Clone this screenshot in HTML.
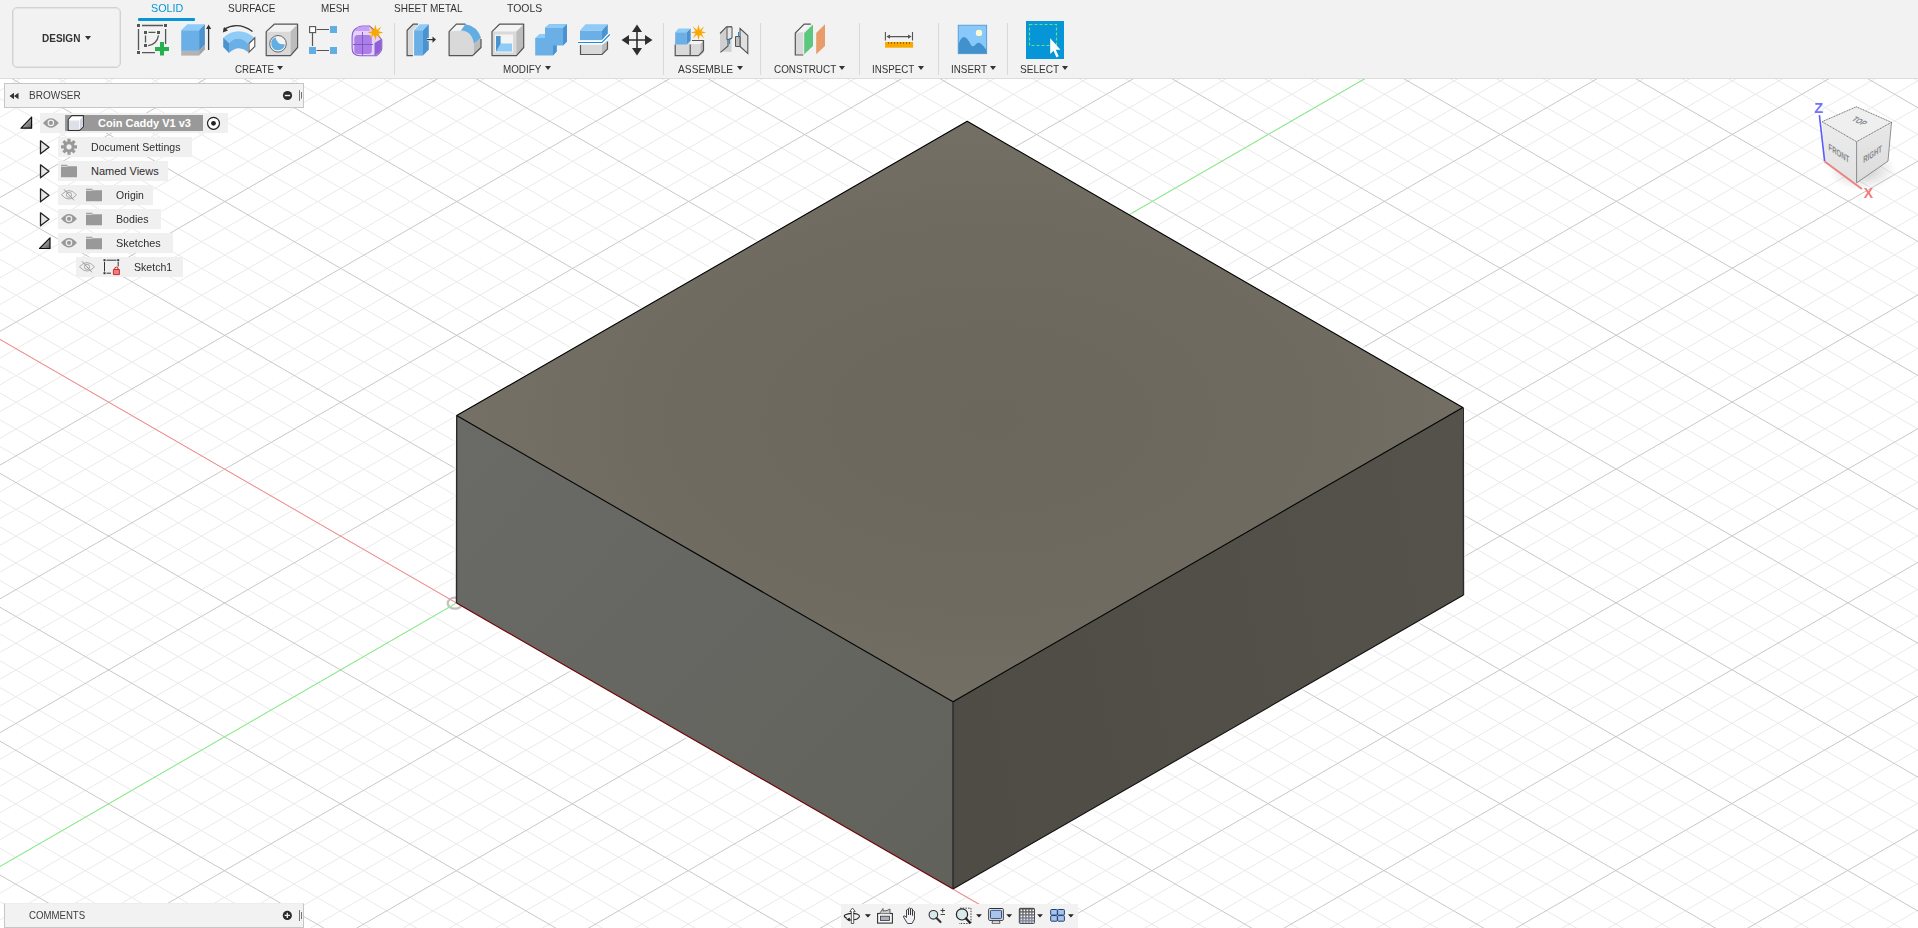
<!DOCTYPE html>
<html><head><meta charset="utf-8"><title>Fusion</title>
<style>
*{box-sizing:border-box;margin:0;padding:0}
html,body{width:1918px;height:928px;overflow:hidden;background:#fff;font-family:"Liberation Sans",sans-serif;color:#3c3c3c}
.abs{position:absolute}
#vp{position:absolute;left:0;top:0}
#tb{position:absolute;left:0;top:0;width:1918px;height:79px;background:#f2f2f2;border-bottom:1px solid #dcdcdc}
.tab{position:absolute;top:2px;font-size:11px;line-height:12px;color:#333;white-space:nowrap;transform-origin:0 0}
.lbl{position:absolute;top:63px;font-size:11px;line-height:12px;color:#333;white-space:nowrap;transform-origin:0 0}
.car2{position:absolute;top:66.3px;width:0;height:0;border-left:3px solid transparent;border-right:3px solid transparent;border-top:4.5px solid #333}
.car{display:inline-block;width:0;height:0;border-left:3px solid transparent;border-right:3px solid transparent;border-top:4px solid #3c3c3c;vertical-align:2px;margin-left:3px}
.sep{position:absolute;top:23px;width:1px;height:52px;background:#d9d9d9}
.ic{position:absolute;top:18px}
.row{position:absolute;height:20px;background:#f0f0f0}
.rt{position:absolute;font-size:11px;line-height:12px;color:#2e2e2e;white-space:nowrap;transform-origin:0 0}
</style></head><body>
<svg id="vp" width="1918" height="928" viewBox="0 0 1918 928">
<defs>
<radialGradient id="gTop" cx="990" cy="420" r="560" gradientUnits="userSpaceOnUse" gradientTransform="translate(990 420) scale(1 0.6) translate(-990 -420)">
<stop offset="0" stop-color="#6b675d"/><stop offset="0.55" stop-color="#6e6a5f"/><stop offset="1" stop-color="#767166"/>
</radialGradient>
<linearGradient id="gLeft" x1="456" y1="415" x2="953" y2="889" gradientUnits="userSpaceOnUse">
<stop offset="0" stop-color="#6a6b66"/><stop offset="1" stop-color="#62625d"/>
</linearGradient>
<linearGradient id="gRight" x1="953" y1="700" x2="1463" y2="600" gradientUnits="userSpaceOnUse">
<stop offset="0" stop-color="#4f4b45"/><stop offset="1" stop-color="#55514b"/>
</linearGradient>
<filter id="blur1" x="-5%" y="-5%" width="110%" height="110%"><feGaussianBlur stdDeviation="1.2"/></filter>
</defs>
<path d="M0 901.83L1918 2008.94M0 848.27L1918 1955.38M0 821.49L1918 1928.61M0 794.72L1918 1901.83M0 767.94L1918 1875.05M0 714.38L1918 1821.50M0 687.61L1918 1794.72M0 660.83L1918 1767.94M0 634.05L1918 1741.16M0 580.50L1918 1687.61M0 553.72L1918 1660.83M0 526.94L1918 1634.05M0 500.16L1918 1607.27M0 446.61L1918 1553.72M0 419.83L1918 1526.94M0 393.05L1918 1500.16M0 366.28L1918 1473.39M0 312.72L1918 1419.83M0 285.94L1918 1393.05M0 259.17L1918 1366.28M0 232.39L1918 1339.50M0 178.83L1918 1285.94M0 152.06L1918 1259.17M0 125.28L1918 1232.39M0 98.50L1918 1205.61M0 44.95L1918 1152.06M0 18.17L1918 1125.28M0 -8.61L1918 1098.50M0 -35.39L1918 1071.72M0 -88.94L1918 1018.17M0 -115.72L1918 991.39M0 -142.50L1918 964.61M0 -169.28L1918 937.84M0 -222.83L1918 884.28M0 -249.61L1918 857.50M0 -276.39L1918 830.73M0 -303.16L1918 803.95M0 -356.72L1918 750.39M0 -383.50L1918 723.62M0 -410.27L1918 696.84M0 -437.05L1918 670.06M0 -490.61L1918 616.51M0 -517.38L1918 589.73M0 -544.16L1918 562.95M0 -570.94L1918 536.17M0 -624.49L1918 482.62M0 -651.27L1918 455.84M0 -678.05L1918 429.06M0 -704.83L1918 402.29M0 -758.38L1918 348.73M0 -785.16L1918 321.95M0 -811.94L1918 295.18M0 -838.71L1918 268.40M0 -892.27L1918 214.84M0 -919.05L1918 188.06M0 -945.82L1918 161.29M0 -972.60L1918 134.51M0 -1026.16L1918 80.95M0 90.51L1918 -1016.14M0 117.27L1918 -989.39M0 144.02L1918 -962.63M0 170.78L1918 -935.88M0 224.29L1918 -882.37M0 251.04L1918 -855.61M0 277.79L1918 -828.86M0 304.55L1918 -802.10M0 358.06L1918 -748.60M0 384.81L1918 -721.84M0 411.57L1918 -695.09M0 438.32L1918 -668.33M0 491.83L1918 -614.82M0 518.58L1918 -588.07M0 545.34L1918 -561.31M0 572.09L1918 -534.56M0 625.60L1918 -481.05M0 652.36L1918 -454.30M0 679.11L1918 -427.54M0 705.87L1918 -400.79M0 759.37L1918 -347.28M0 786.13L1918 -320.52M0 812.88L1918 -293.77M0 839.64L1918 -267.01M0 893.15L1918 -213.51M0 919.90L1918 -186.75M0 946.66L1918 -160.00M0 973.41L1918 -133.24M0 1026.92L1918 -79.73M0 1053.67L1918 -52.98M0 1080.43L1918 -26.22M0 1107.18L1918 0.53M0 1160.69L1918 54.04M0 1187.45L1918 80.79M0 1214.20L1918 107.55M0 1240.96L1918 134.30M0 1294.46L1918 187.81M0 1321.22L1918 214.57M0 1347.97L1918 241.32M0 1374.73L1918 268.07M0 1428.24L1918 321.58M0 1454.99L1918 348.34M0 1481.75L1918 375.09M0 1508.50L1918 401.85M0 1562.01L1918 455.36M0 1588.76L1918 482.11M0 1615.52L1918 508.86M0 1642.27L1918 535.62M0 1695.78L1918 589.13M0 1722.54L1918 615.88M0 1749.29L1918 642.64M0 1776.04L1918 669.39M0 1829.55L1918 722.90M0 1856.31L1918 749.65M0 1883.06L1918 776.41M0 1909.82L1918 803.16M0 1963.33L1918 856.67M0 1990.08L1918 883.43M0 2016.83L1918 910.18" stroke="#eaeaea" stroke-width="1" fill="none"/><path d="M0 875.05L1918 1982.16M0 741.16L1918 1848.27M0 607.27L1918 1714.39M0 473.39L1918 1580.50M0 339.50L1918 1446.61M0 205.61L1918 1312.72M0 71.72L1918 1178.83M0 -62.16L1918 1044.95M0 -196.05L1918 911.06M0 -329.94L1918 777.17M0 -463.83L1918 643.28M0 -597.72L1918 509.40M0 -731.60L1918 375.51M0 -865.49L1918 241.62M0 -999.38L1918 107.73M0 197.53L1918 -909.12M0 331.30L1918 -775.35M0 465.08L1918 -641.58M0 598.85L1918 -507.80M0 732.62L1918 -374.03M0 866.39L1918 -240.26M0 1000.16L1918 -106.49M0 1133.94L1918 27.28M0 1267.71L1918 161.06M0 1401.48L1918 294.83M0 1535.25L1918 428.60M0 1669.03L1918 562.37M0 1802.80L1918 696.15M0 1936.57L1918 829.92" stroke="#c8c8c8" stroke-width="1" fill="none"/>
<path d="M967.2 121.3 L1462.8 407.5 L1463.5 595 L953 889 L456.5 603 L456.7 415.6Z" fill="none" stroke="#fff" stroke-width="5" stroke-opacity="0.75" stroke-linejoin="round" filter="url(#blur1)"/>
<ellipse cx="455" cy="603.2" rx="7.3" ry="5.5" stroke="#c2c2c2" stroke-width="2.3" fill="none"/>
<path d="M456.5 603 L0 339.4" stroke="#ff8a8a" stroke-width="1" fill="none"/>
<path d="M456.5 603 L0 866.6" stroke="#80f880" stroke-width="1" fill="none"/>
<path d="M456.5 603 L1600 -57.3" stroke="#80f880" stroke-width="1" fill="none"/>
<path d="M953 889 L990 910.4" stroke="#ff8a8a" stroke-width="1" fill="none"/>
<path d="M967.2 121.3 L1462.8 407.5 L953 701.7 L456.7 415.6Z" fill="url(#gTop)"/>
<path d="M456.7 415.6 L953 701.7 L953 889 L456.5 603Z" fill="url(#gLeft)"/>
<path d="M953 701.7 L1462.8 407.5 L1463.5 595 L953 889Z" fill="url(#gRight)"/>
<path d="M967.2 121.3 L1462.8 407.5 L953 701.7 L456.7 415.6Z" stroke="#000" stroke-width="1.1" fill="none" stroke-linejoin="round"/>
<path d="M953 701.7 L953 889 M1463.3 407.5 L1463.5 595 M456.7 415.6 L456.5 603" stroke="#2a2a2a" stroke-width="1.4" fill="none"/>
<path d="M1463.5 595 L953 889" stroke="#111" stroke-width="1.1" fill="none"/>
<path d="M456.5 603 L953 889" stroke="#700000" stroke-width="1.1" fill="none"/>
</svg>
<div id="tb">
<div class="abs" style="left:12px;top:7px;width:109px;height:61px;border:1px solid #d2d2d2;border-radius:5px;box-shadow:inset 0 0 0 1px #e4e4e4"></div>
<div class="abs" style="left:41.6px;top:32px;font-size:11px;font-weight:bold;line-height:12px;color:#333;transform:scaleX(0.91);transform-origin:0 0">DESIGN</div>
<div class="car2" style="left:85px;top:35.5px;border-top-color:#333"></div>
<div class="tab" style="left:150.6px;transform:scaleX(0.978);color:#0696d7">SOLID</div>
<div class="tab" style="left:227.8px;transform:scaleX(0.912)">SURFACE</div>
<div class="tab" style="left:320.6px;transform:scaleX(0.893)">MESH</div>
<div class="tab" style="left:393.6px;transform:scaleX(0.910)">SHEET METAL</div>
<div class="tab" style="left:506.8px;transform:scaleX(0.948)">TOOLS</div>
<div class="abs" style="left:138px;top:18px;width:57px;height:3px;background:#0696d7;border-radius:1px"></div>
<div class="lbl" style="left:234.6px;transform:scaleX(0.888)">CREATE</div>
<div class="car2" style="left:277.4px"></div>
<div class="lbl" style="left:502.6px;transform:scaleX(0.895)">MODIFY</div>
<div class="car2" style="left:545.4px"></div>
<div class="lbl" style="left:678.2px;transform:scaleX(0.930)">ASSEMBLE</div>
<div class="car2" style="left:737.2px"></div>
<div class="lbl" style="left:773.6px;transform:scaleX(0.901)">CONSTRUCT</div>
<div class="car2" style="left:839.2px"></div>
<div class="lbl" style="left:872.0px;transform:scaleX(0.885)">INSPECT</div>
<div class="car2" style="left:917.5px"></div>
<div class="lbl" style="left:951.3px;transform:scaleX(0.894)">INSERT</div>
<div class="car2" style="left:990.0px"></div>
<div class="lbl" style="left:1020.4px;transform:scaleX(0.916)">SELECT</div>
<div class="car2" style="left:1062.0px"></div>
<div class="sep" style="left:394px"></div>
<div class="sep" style="left:663px"></div>
<div class="sep" style="left:760px"></div>
<div class="sep" style="left:859px"></div>
<div class="sep" style="left:938px"></div>
<div class="sep" style="left:1007px"></div>
<svg class="abs" style="left:0;top:0" width="1100" height="78" viewBox="0 0 1100 78">
<!-- Sketch -->
<g stroke="#555" stroke-width="1.3" fill="none">
<path d="M142 25.5H163M138.5 29V50M165.6 29V44M142 52.6H155"/>
<path d="M148.5 32.4H155.5M145.5 35.5V42.5M158.5 35.3Q157 44 148.2 45.7"/>
</g>
<g fill="#555">
<rect x="137" y="24" width="3" height="3"/><rect x="164" y="24" width="3" height="3"/><rect x="137" y="51" width="3" height="3"/>
<rect x="144" y="31" width="3" height="3"/><rect x="157" y="31" width="3" height="3"/><rect x="144" y="44" width="3" height="3"/>
</g>
<path d="M155 47.1H169V50.9H155Z M160 42H164V55.6H160Z" fill="#22b14c"/>
<!-- Extrude -->
<path d="M181.2 30.2H199.1V50.9H181.2Z" fill="#6aafe6"/>
<path d="M181.2 30.2L187.3 24.2H204.9L199.1 30.2Z" fill="#8ecbf7"/>
<path d="M199.1 30.2L204.9 24.2V44.5L199.1 50.9Z" fill="#4a93cf"/>
<path d="M181.2 50.9H199.1V55.6H181.2Z" fill="#b3b3b3"/>
<path d="M199.1 50.9L204.9 44.5V49.5L199.1 55.6Z" fill="#a3a3a3"/>
<path d="M208.6 28V50" stroke="#333" stroke-width="1.3"/>
<path d="M206 29L208.6 24.5L211.2 29Z" fill="#333"/>
<!-- Revolve -->
<path d="M223.5 29.5Q238 21 252.5 31.5" stroke="#333" stroke-width="1.2" fill="none"/>
<path d="M222.8 32.6L224 27L228 30.5Z" fill="#333"/>
<path d="M223.2 37.7Q238.4 25 254.4 37.7L248 43.5Q238.4 34 229 43Z" fill="#8ecbf7"/>
<path d="M229 43Q238.4 34 248 43.5L248 51.9Q238.4 44 229 52.9Z" fill="#6aafe6"/>
<path d="M223.2 37.7L229 43V52.9L223.2 47Z" fill="#4a93cf"/>
<path d="M249 43.5L254.8 37.8V46.5L249 52.2Z" fill="#fff" stroke="#555" stroke-width="1.1"/>
<!-- Hole -->
<path d="M266.2 31.6H290.5V55.6H266.2Z" fill="#d9d9d9"/>
<path d="M266.2 31.6L274.2 24.2H297.6L290.5 31.6Z" fill="#f2f2f2"/>
<path d="M290.5 31.6L297.6 24.2V47.5L290.5 55.6Z" fill="#bcbcbc"/>
<path d="M266.2 31.6L274.2 24.2H297.6V47.5L290.5 55.6H266.2Z" fill="none" stroke="#555" stroke-width="1.2" stroke-linejoin="round"/>
<circle cx="278" cy="43.8" r="8.3" fill="#f4f4f4" stroke="#666" stroke-width="1"/>
<path d="M275.5 37.2A6.8 6.8 0 1 0 284.8 44.3Q277 45 275.5 37.2Z" fill="#62ade4"/>
<!-- Pattern -->
<path d="M316.5 29.5H329M312.5 33V46M316.5 50.5H329" stroke="#555" stroke-width="1.2"/>
<rect x="309.6" y="26.6" width="6" height="6" fill="#fff" stroke="#555" stroke-width="1.1"/>
<rect x="330" y="26" width="7" height="7" fill="#62ade4"/>
<rect x="309" y="47" width="7" height="7" fill="#62ade4"/>
<rect x="330" y="47" width="7" height="7" fill="#62ade4"/>
<!-- Form -->
<path d="M362 26H369.5L373 29L381.8 40V48.5Q381.8 51 379 53.5L376.5 55.8H360Q352.1 55.8 352.1 48V37Q352.1 31 356 28.5Q359 26 362 26Z" fill="#e3d3fa" stroke="#8a5fce" stroke-width="1.1"/>
<path d="M358 27H369L370 31H355Z" fill="#c99ef7"/>
<rect x="354.3" y="35" width="17.5" height="19" rx="3.5" fill="#ac7fe8"/>
<path d="M374.5 43L381.3 39V48.5Q381.3 50.5 378.5 53L374.5 56Z" fill="#8e62d0"/>
<path d="M353 44.5H373M362.5 32V55.5" stroke="#7e52c0" stroke-width="0.9"/>
<path d="M375.4 24.5L376.8 30.1L381.3 26.6L378.5 31.3L383.4 32.5L378.5 33.7L381.3 38.4L376.8 34.9L375.4 40.5L374 34.9L369.5 38.4L372.3 33.7L367.4 32.5L372.3 31.3L369.5 26.6L374 30.1Z" fill="#f9a800"/>
</svg>

<svg class="abs" style="left:0;top:0" width="1100" height="78" viewBox="0 0 1100 78">
<!-- Press pull -->
<path d="M407.1 30.2L413.2 24.2H418V30.2H412.9V55.6H407.1Z" fill="#d9d9d9"/>
<path d="M413 30.2L418 25V30.2Z" fill="#f4f4f4"/>
<path d="M412.9 55.6H407.1V30.2L413.2 24.2H418" fill="none" stroke="#555" stroke-width="1.2"/>
<path d="M414.1 30.2H423V55.6H414.1Z" fill="#6aafe6"/>
<path d="M414.1 30.2L419.7 24.2H428.8L423 30.2Z" fill="#8ecbf7"/>
<path d="M423 30.2L428.8 24.2V49.4L423 55.6Z" fill="#4a93cf"/>
<path d="M427 39.6H433" stroke="#f2f2f2" stroke-width="3"/>
<path d="M427 39.6H433" stroke="#333" stroke-width="1.2"/>
<path d="M432.5 36.5L436 39.6L432.5 42.7Z" fill="#333"/>
<!-- Fillet -->
<path d="M449.1 31.6L456.3 24.2H465.4Q476 26 481 37.7L474 43.8V55.6H449.1Z" fill="#d9d9d9"/>
<path d="M449.1 31.6L456.3 24.2H465.4L461 30.5Z" fill="#f4f4f4"/>
<path d="M461 30.5Q472 31 474 43.8L481 37.7Q477 26 465.4 24.2Z" fill="#62ade4"/>
<path d="M474 43.8L481 37.5V48L474 55.6Z" fill="#bcbcbc"/>
<path d="M465.4 24.2H456.3L449.1 31.6V55.6H472.5L481 47.5V39" fill="none" stroke="#555" stroke-width="1.2" stroke-linejoin="round"/>
<!-- Shell -->
<path d="M492 31.6L499.5 24.2H523.7V47.5L516.5 55.6H492Z" fill="#d9d9d9"/>
<path d="M492 31.6L499.5 24.2H523.7L516.5 31.6Z" fill="#f4f4f4"/>
<path d="M516.5 31.6L523.7 24.2V47.5L516.5 55.6Z" fill="#bcbcbc"/>
<path d="M492 31.6L499.5 24.2H523.7V47.5L516.5 55.6H492Z" fill="none" stroke="#555" stroke-width="1.2" stroke-linejoin="round"/>
<rect x="495" y="34.5" width="18" height="18" fill="#f4f4f4"/>
<path d="M496 36H500.5V43.5H512V51.5H496Z" fill="#8ecbf7"/>
<path d="M496 36H500.5V43.5L496 51.5Z" fill="#4a93cf"/>
<!-- Combine -->
<path d="M535.2 38H545V27.8L549.2 24.2H567V41.5L563 45.5H556.7V51.5L553 55.6H535.2Z" fill="#6aafe6"/>
<path d="M545 28L549.2 24.2H567L563 28Z M535.2 38L539.5 34H545V38Z" fill="#8ecbf7"/>
<path d="M563 28L567 24.2V41.5L563 45.5Z M553 45.5H556.7V51.5L553 55.6Z" fill="#4a93cf"/>
<!-- Split -->
<path d="M580 30.5H602V40H580Z" fill="#6aafe6"/>
<path d="M580 30.5L585.5 24.2H607.8L602 30.5Z" fill="#8ecbf7"/>
<path d="M602 30.5L607.8 24.2V33.5L602 40Z" fill="#4a93cf"/>
<path d="M578 42.5H602L609.8 34.5" stroke="#fff" stroke-width="3" fill="none"/>
<path d="M578 42.5H602L609.8 34.5" stroke="#1a8be0" stroke-width="1.1" fill="none"/>
<path d="M580.5 45H602V54.5H580.5Z" fill="#d9d9d9"/>
<path d="M602 45L607.5 41V49L602 54.5Z" fill="#bcbcbc"/>
<path d="M580.5 45V54.5H602L607.5 49V41.5" fill="none" stroke="#555" stroke-width="1.2"/>
<!-- Move -->
<path d="M637 28V50M624 40H650" stroke="#2e2e2e" stroke-width="1.6"/>
<path d="M637 24.5L642 32H632Z M637 55.5L642 48H632Z M621.5 40L629 35V45Z M652.5 40L645 35V45Z" fill="#2e2e2e"/>
<!-- Assemble -->
<path d="M675.2 37.5H690.2V55.6H675.2Z M690.2 44H700.5V55.6H690.2Z" fill="#d9d9d9"/>
<path d="M690.2 44L693 40.5H703.5L700.5 44Z" fill="#f4f4f4"/>
<path d="M700.5 44L703.5 40.5V52.5L700.5 55.6Z" fill="#bcbcbc"/>
<path d="M675.2 44.5V55.6H698.5L703.5 50.5V40.5H692M690.2 44.5V55.6" fill="none" stroke="#555" stroke-width="1.2"/>
<path d="M675.2 32.2H686.7V44.5H675.2Z" fill="#6aafe6"/>
<path d="M675.2 32.2L678.5 28.5H690.7L686.7 32.2Z" fill="#8ecbf7"/>
<path d="M686.7 32.2L690.7 28.5V40.5L686.7 44.5Z" fill="#4a93cf"/>
<path d="M698.5 24.5L699.8 30L704.2 26.6L701.4 31.2L706.3 32.4L701.4 33.6L704.2 38.2L699.8 34.8L698.5 40.3L697.2 34.8L692.8 38.2L695.6 33.6L690.7 32.4L695.6 31.2L692.8 26.6L697.2 30Z" fill="#f9a800"/>
<!-- Joint -->
<path d="M720 34L727.5 27V41L731.5 39V52L723 51.5L720 52.5Z" fill="#d0d0d0"/>
<path d="M720 33.5L726.5 26.8H731.5V38.5L728 40V46L720.5 52.3" fill="none" stroke="#555" stroke-width="1.1"/>
<path d="M727 27H732V38L727 40Z" fill="#e6e6e6" stroke="#555" stroke-width="1"/>
<path d="M740 28.5L747.8 35.5V53.5L740 46.5Z" fill="#e0e0e0" stroke="#555" stroke-width="1.1"/>
<path d="M735.5 36.5H740V46.5H735.5Z" fill="#c0c0c0" stroke="#555" stroke-width="1"/>
<path d="M729.5 38.5V44M738.5 32V37.5" stroke="#1a8be0" stroke-width="1"/>
<!-- Construct -->
<path d="M795.3 33.1L804.2 24.2H810.8L803.3 31.5V55H795.3Z" fill="#d9d9d9"/>
<path d="M795.3 33.1L804.2 24.2H810.8L803.3 32Z" fill="#f4f4f4"/>
<path d="M803.3 55H795.3V33.1L804.2 24.2H810.8" fill="none" stroke="#555" stroke-width="1.2"/>
<path d="M804.2 33.1L813 24.6V45.9L804.2 54.3Z" fill="#5cc77f"/>
<path d="M816.2 33.1L825 24.2V45.9L816.2 54.3Z" fill="#e89c6a"/>
<!-- Inspect -->
<path d="M885.4 32V40.4M912.5 32V40.4M887.5 36.6H910.5" stroke="#555" stroke-width="1.1"/>
<path d="M886.5 36.6L890 34.5V38.7Z M911.5 36.6L908 34.5V38.7Z" fill="#555"/>
<rect x="885.1" y="42" width="28" height="5.7" fill="#f9a800"/>
<path d="M888.5 42V44M891.5 42V44M894.5 42V44M897.5 42V44M900.5 42V44M903.5 42V44M906.5 42V44M909.5 42V44" stroke="#7a5a00" stroke-width="0.8"/>
<!-- Insert -->
<rect x="958.2" y="25.2" width="28.5" height="28.5" fill="#88c8fa" stroke="#4a93cf" stroke-width="0.8"/>
<path d="M958.6 44Q961 37 964 37Q967 37 971 45Q973 48 976 44Q978 42 980 43Q983 45 986.4 50V53.4H958.6Z" fill="#4091cc"/>
<circle cx="979" cy="32.9" r="3.2" fill="#fffbd0"/>
<!-- Select -->
<rect x="1026" y="21" width="38" height="38" fill="#0696d7"/>
<rect x="1029.5" y="24.5" width="27" height="21" fill="none" stroke="#6ee07a" stroke-width="1.1" stroke-dasharray="3 2"/>
<path d="M1050.2 38.3V54L1053.5 50.8L1056.5 57.5L1058.7 56.3L1055.8 49.7H1060.5Z" fill="#fff"/>
</svg>

</div>

<!-- browser panel -->
<div class="abs" style="left:4px;top:83px;width:300px;height:25px;background:#f2f2f2;border:1px solid #c6c6c6"></div>
<div class="rt" style="left:29px;top:89px;color:#3c3c3c;transform:scaleX(0.91)">BROWSER</div>
<div class="row" style="left:40px;top:113px;width:188px;height:20px"></div>
<div class="abs" style="left:65px;top:115px;width:138px;height:16px;background:#999"></div>
<div class="rt" style="left:98px;top:117px;color:#fff;font-weight:bold">Coin Caddy V1 v3</div>
<div class="row" style="left:58px;top:137px;width:134px"></div>
<div class="rt" style="left:91px;top:141px;transform:scaleX(0.963)">Document Settings</div>
<div class="row" style="left:58px;top:161px;width:110px"></div>
<div class="rt" style="left:91px;top:165px">Named Views</div>
<div class="row" style="left:58px;top:185px;width:95px"></div>
<div class="rt" style="left:116px;top:189px;transform:scaleX(0.95)">Origin</div>
<div class="row" style="left:58px;top:209px;width:103px"></div>
<div class="rt" style="left:116px;top:213px;transform:scaleX(0.97)">Bodies</div>
<div class="row" style="left:58px;top:233px;width:115px"></div>
<div class="rt" style="left:116px;top:237px;transform:scaleX(0.99)">Sketches</div>
<div class="row" style="left:76px;top:257px;width:107px"></div>
<div class="rt" style="left:134px;top:261px;transform:scaleX(0.96)">Sketch1</div>
<svg class="abs" style="left:0;top:80px" width="310" height="200" viewBox="0 80 310 200">
<defs>
<linearGradient id="gTri" x1="0" y1="0" x2="1" y2="1"><stop offset="0" stop-color="#e8e8e8"/><stop offset="1" stop-color="#555"/></linearGradient>
<g id="eye"><path d="M-7.9 0Q0 -9.5 7.9 0Q0 9.5 -7.9 0Z" fill="#999"/><circle r="3.3" fill="#f0f0f0"/><circle r="2.1" fill="#999"/></g>
<g id="eyex"><path d="M-7.5 0Q0 -8.5 7.5 0Q0 8.5 -7.5 0Z" fill="none" stroke="#aaa" stroke-width="1"/><circle r="2.6" fill="none" stroke="#aaa" stroke-width="1"/><path d="M-5 -5.5L5 5.5" stroke="#999" stroke-width="1"/></g>
<g id="fold"><path d="M0 0H6L7 1.5H16V12.5H0Z" fill="#999"/><path d="M0 1.5H6.5" stroke="#f0f0f0" stroke-width="0.8"/></g>
<g id="tri"><path d="M0 0L8.5 6.5L0 13Z" fill="#e6e6e6" stroke="#222" stroke-width="1.3" stroke-linejoin="round"/></g>
</defs>
<!-- header icons -->
<path d="M9.5 96L14 92.8V99.2Z M14 96L18.5 92.8V99.2Z" fill="#333"/>
<circle cx="287.5" cy="95.5" r="4.6" fill="#2a2a2a"/><path d="M284.8 95.5H290.2" stroke="#f2f2f2" stroke-width="1.4"/>
<path d="M299.5 90.2V100.9M301.5 92V98.6" stroke="#666" stroke-width="0.9"/>
<!-- row1 -->
<path d="M21 128.2L31.6 117.2V128.2Z" fill="url(#gTri)" stroke="#111" stroke-width="1.2" stroke-linejoin="round"/>
<use href="#eye" x="50.9" y="122.9"/>
<path d="M68.2 119.5L71.8 115.6H83.4V126.6L79.6 130.4H68.2Z" fill="#fff" stroke="#333" stroke-width="1.1" stroke-linejoin="round"/>
<path d="M69 120.5H79V129.8H69Z" fill="#dde0e6"/><path d="M79.8 120L83 116.5V126.3L79.8 129.6Z" fill="#d0d4dc"/>
<circle cx="213.5" cy="123.3" r="6" fill="#fff" stroke="#222" stroke-width="1.2"/><circle cx="213.5" cy="123.3" r="2.4" fill="#222"/>
<!-- row2 -->
<use href="#tri" x="40.5" y="140.8"/>
<g transform="translate(69,146.8)"><circle r="5.6" fill="#999"/><path d="M0 -8V8M-8 0H8M-5.6 -5.6L5.6 5.6M-5.6 5.6L5.6 -5.6" stroke="#999" stroke-width="3.2"/><circle r="2.6" fill="#f0f0f0"/></g>
<!-- row3 -->
<use href="#tri" x="40.5" y="164.8"/>
<use href="#fold" x="61" y="164.8"/>
<!-- row4 -->
<use href="#tri" x="40.5" y="188.8"/>
<use href="#eyex" x="69" y="194.8"/>
<use href="#fold" x="86" y="188.8"/>
<!-- row5 -->
<use href="#tri" x="40.5" y="212.8"/>
<use href="#eye" x="69" y="218.8"/>
<use href="#fold" x="86" y="212.8"/>
<!-- row6 -->
<path d="M39.5 248.5L50 237.8V248.5Z" fill="url(#gTri)" stroke="#111" stroke-width="1.2" stroke-linejoin="round"/>
<use href="#eye" x="69" y="242.8"/>
<use href="#fold" x="86" y="236.8"/>
<!-- row7 -->
<use href="#eyex" x="87" y="266.8"/>
<g stroke="#333" stroke-width="1" fill="none"><path d="M106.5 260.2H116.5M104.5 262V271.5M106.5 273.2H111M118.2 262V266.5"/></g>
<g fill="#333"><rect x="103.5" y="259.2" width="2" height="2"/><rect x="117.2" y="259.2" width="2" height="2"/><rect x="103.5" y="272.2" width="2" height="2"/></g>
<path d="M113.4 269.5H119.4V274.6H113.4Z" fill="#e88080" stroke="#d42a2a" stroke-width="1"/><path d="M114.8 269.5V268.3Q116.4 265.8 118 268.3V269.5" fill="none" stroke="#d42a2a" stroke-width="1.1"/>
</svg>
<!-- comments -->
<div class="abs" style="left:4px;top:903px;width:300px;height:25px;background:#f2f2f2;border:1px solid #c6c6c6;border-top-color:#ededed"></div>
<div class="rt" style="left:29px;top:909px;color:#3c3c3c;transform:scaleX(0.875)">COMMENTS</div>
<svg class="abs" style="left:270px;top:905px" width="40" height="23" viewBox="270 905 40 23">
<circle cx="287.3" cy="915.4" r="4.6" fill="#2a2a2a"/><path d="M284.6 915.4H290M287.3 912.7V918.1" stroke="#f2f2f2" stroke-width="1.3"/>
<path d="M299.5 910V921M301.5 912V919" stroke="#666" stroke-width="0.9"/>
</svg>

<!-- viewcube -->
<svg class="abs" style="left:1790px;top:95px" width="128" height="110" viewBox="1790 95 128 110">
<defs>
<radialGradient id="gSh" cx="0.5" cy="0.5" r="0.5"><stop offset="0" stop-color="#000" stop-opacity="0.22"/><stop offset="1" stop-color="#000" stop-opacity="0"/></radialGradient>
<linearGradient id="gVL" x1="0" y1="0" x2="0" y2="1"><stop offset="0" stop-color="#ececec"/><stop offset="1" stop-color="#e2e2e2"/></linearGradient>
<linearGradient id="gVR" x1="0" y1="0" x2="0" y2="1"><stop offset="0" stop-color="#e8e8e8"/><stop offset="1" stop-color="#dcdcdc"/></linearGradient>
</defs>
<ellipse cx="1862" cy="170" rx="34" ry="20" fill="url(#gSh)"/>
<path d="M1856.3 106.8L1891.5 122.3L1856.6 141.7L1822 121.7Z" fill="#efefef"/>
<path d="M1822 121.7L1856.6 141.7V182.9L1824.6 161.1Z" fill="url(#gVL)"/>
<path d="M1856.6 141.7L1891.5 122.3L1888 161.1L1856.6 182.9Z" fill="url(#gVR)"/>
<path d="M1856.3 106.8L1891.5 122.3L1856.6 141.7L1822 121.7Z" fill="none" stroke="#555" stroke-width="0.8" stroke-dasharray="1.2 0.6"/>
<path d="M1856.6 141.7V182.9M1891.5 122.3L1888 161.1L1856.6 182.9" fill="none" stroke="#666" stroke-width="0.7"/>
<path d="M1819.4 115.2L1824.6 161.1" stroke="#5a5aff" stroke-width="1.6"/>
<path d="M1824.6 161.5L1862 189" stroke="#ec8282" stroke-width="2"/>
<text x="1814.3" y="113.3" font-family="Liberation Sans" font-size="14.5" font-weight="bold" fill="#7272ff">Z</text>
<text x="1863.8" y="198" font-family="Liberation Sans" font-size="14" font-weight="bold" fill="#f27a7a">X</text>
<g font-family="Liberation Sans" font-size="10" font-weight="bold" fill="#85878b">
<text transform="matrix(0.6,0.3,-0.7,0.55,1851,120)">TOP</text>
<text transform="translate(1828.6,149.8) skewY(33) scale(0.6,0.95)">FRONT</text>
<text transform="translate(1863.3,163.2) skewY(-32) scale(0.6,0.95)">RIGHT</text>
</g>
</svg>
<!-- navbar -->
<div class="abs" style="left:841px;top:904px;width:237px;height:24px;background:#f2f2f2"></div>
<svg class="abs" style="left:838px;top:902px" width="245" height="26" viewBox="838 902 245 26">
<g fill="#222">
<path d="M864.9 914.2H870.9L867.9 917.5Z"/><path d="M976.1 914.2H981.9L979 917.5Z"/><path d="M1006.3 914.2H1012.1L1009.2 917.5Z"/><path d="M1037.2 914.2H1042.9L1040 917.5Z"/><path d="M1068 914.2H1073.8L1070.9 917.5Z"/>
</g>
<!-- orbit -->
<path d="M847 918.5Q842 916 846 914.5Q852 912.5 857 914Q862 916 857 919Q853 920.5 848.5 919.8" fill="none" stroke="#222" stroke-width="1.1"/>
<path d="M846.2 919.5L849.8 917.5V921.5Z" fill="#222"/>
<path d="M851.3 923.5V911.5H849.8L852.5 908L855.2 911.5H853.7V923.5Z" fill="#fff" stroke="#333" stroke-width="0.8"/>
<!-- look at -->
<rect x="877.6" y="913.5" width="14.8" height="9.6" fill="#f8f8f8" stroke="#333" stroke-width="1.1"/>
<rect x="880.5" y="916.2" width="9" height="4.3" fill="#aab0c0" stroke="#333" stroke-width="0.8"/>
<path d="M879.5 913.5L883 908.5V911L887 910.5L890 909V913.5" fill="#ccc" stroke="#444" stroke-width="0.8"/>
<!-- hand -->
<path d="M907.5 923.5L903.5 917Q903 915.5 905 916L906.5 917.5V910Q907.5 908.8 908.5 910V915V908.5Q909.5 907.3 910.5 908.5V915V909Q911.5 907.8 912.5 909V915.5V911Q913.5 910 914.5 911.5V919L912 923.5Z" fill="#eef0f4" stroke="#333" stroke-width="0.9" stroke-linejoin="round"/>
<!-- zoom -->
<circle cx="933.4" cy="914.8" r="4.3" fill="#d6eaee" stroke="#333" stroke-width="1.1"/>
<path d="M936.5 918L940.5 922" stroke="#333" stroke-width="2.2" stroke-linecap="round"/>
<path d="M940.5 910.5H945M942.7 908.3V912.7M940.5 914.5H945" stroke="#333" stroke-width="0.9"/>
<!-- zoom window -->
<path d="M960 908.2H971V923.5H959" fill="none" stroke="#333" stroke-width="0.9" stroke-dasharray="1.5 1.2"/>
<circle cx="962" cy="914.4" r="5.6" fill="#d6eaee" stroke="#222" stroke-width="1.2"/>
<path d="M966 918.5L969.8 922.5" stroke="#222" stroke-width="2.4" stroke-linecap="round"/>
<!-- display -->
<rect x="988.7" y="908.5" width="14.6" height="11.9" rx="1" fill="#f6f6f6" stroke="#333" stroke-width="1"/>
<rect x="990.5" y="910.3" width="11" height="8.3" rx="0.8" fill="#a8c4e8" stroke="#1e3f7a" stroke-width="0.9"/>
<path d="M992.5 920.8H999.5L1000 923.3H992Z" fill="#f6f6f6" stroke="#333" stroke-width="0.8"/>
<!-- grid -->
<defs><linearGradient id="gGr" x1="0" y1="0" x2="0" y2="1"><stop offset="0" stop-color="#555"/><stop offset="1" stop-color="#8890a0"/></linearGradient></defs>
<rect x="1019.3" y="908.3" width="15.2" height="15.2" rx="1" fill="url(#gGr)" stroke="#333" stroke-width="0.8"/>
<g fill="#fff">
<rect x="1020.6" y="909.6" width="1.6" height="1.6"/><rect x="1023.6" y="909.6" width="1.6" height="1.6"/><rect x="1026.6" y="909.6" width="1.6" height="1.6"/><rect x="1029.6" y="909.6" width="1.6" height="1.6"/><rect x="1032.4" y="909.6" width="1.6" height="1.6"/>
<rect x="1020.6" y="912.6" width="1.6" height="1.6"/><rect x="1023.6" y="912.6" width="1.6" height="1.6"/><rect x="1026.6" y="912.6" width="1.6" height="1.6"/><rect x="1029.6" y="912.6" width="1.6" height="1.6"/><rect x="1032.4" y="912.6" width="1.6" height="1.6"/>
<rect x="1020.6" y="915.6" width="1.6" height="1.6"/><rect x="1023.6" y="915.6" width="1.6" height="1.6"/><rect x="1026.6" y="915.6" width="1.6" height="1.6"/><rect x="1029.6" y="915.6" width="1.6" height="1.6"/><rect x="1032.4" y="915.6" width="1.6" height="1.6"/>
<rect x="1020.6" y="918.6" width="1.6" height="1.6" fill="#dde"/><rect x="1023.6" y="918.6" width="1.6" height="1.6" fill="#dde"/><rect x="1026.6" y="918.6" width="1.6" height="1.6" fill="#dde"/><rect x="1029.6" y="918.6" width="1.6" height="1.6" fill="#dde"/><rect x="1032.4" y="918.6" width="1.6" height="1.6" fill="#dde"/>
<rect x="1020.6" y="921.4" width="1.6" height="1.4" fill="#dde"/><rect x="1023.6" y="921.4" width="1.6" height="1.4" fill="#dde"/><rect x="1026.6" y="921.4" width="1.6" height="1.4" fill="#dde"/><rect x="1029.6" y="921.4" width="1.6" height="1.4" fill="#dde"/><rect x="1032.4" y="921.4" width="1.6" height="1.4" fill="#dde"/>
</g>
<!-- viewports -->
<g fill="#a8c4e8" stroke="#1e3f7a" stroke-width="1">
<rect x="1050.7" y="909.5" width="6.6" height="5.6" rx="0.8"/><rect x="1057.6" y="909.5" width="6.8" height="5.6" rx="0.8"/>
<rect x="1050.7" y="915.6" width="6.6" height="5.6" rx="0.8"/><rect x="1057.6" y="915.6" width="6.8" height="5.6" rx="0.8"/>
</g>
</svg>

</body></html>
